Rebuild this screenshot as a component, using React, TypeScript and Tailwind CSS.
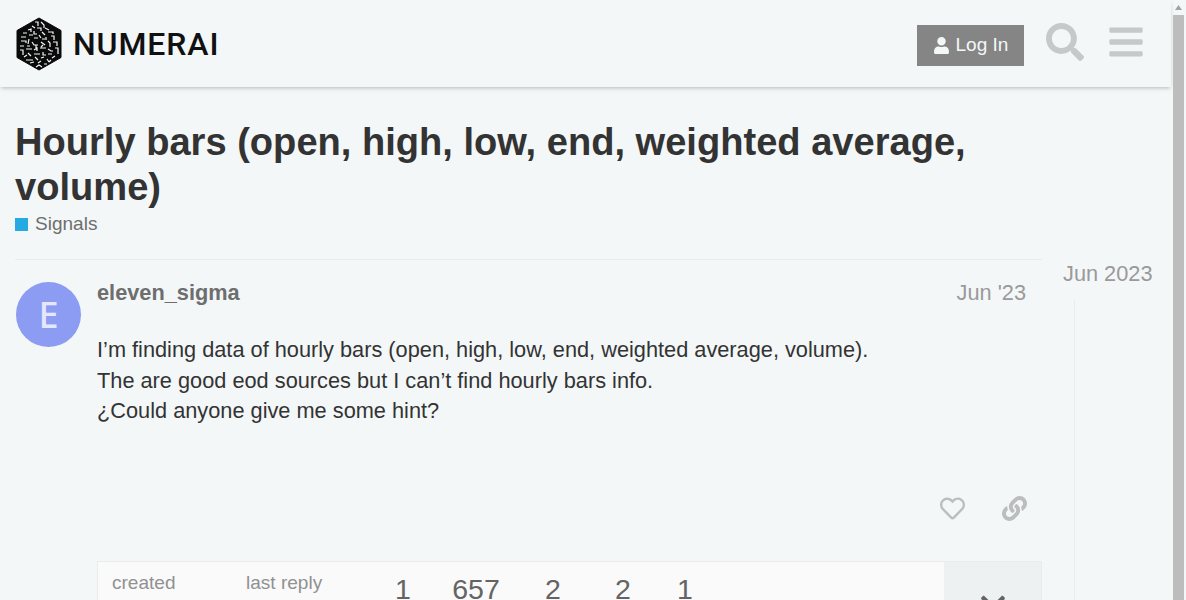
import { FaBars, FaChevronDown, FaLink, FaRegHeart, FaSearch, FaUser } from "react-icons/fa";

const logoMarks = [
  "M20 5h3v4M26 5l3 3v3M17 9l3 2M22 11h4v3M30 11l4 2M13 13l3-1v3M19 14v3h3M27 15l3 3M33 15h5v2M8 16h4M14 18h4M24 18l2 3M31 20v3M36 19h3v4M6 20h5M19 21h4M27 22h3",
  "M6 24h5v2M14 22l-1 5M17 25l2 3h4M26 25l4 3M33 24l2 2v4M38 25h4v4M5 29h4M12 29h3M21 28v3M5 33h3v5M11 32h6M19 33l3-2v3M25 31h6M33 32l3 2h2M40 31h3v6M28 28l-2 2",
  "M9 40l3-2M13 36l3 3M19 37h6M28 35v3h3M33 37h4M40 39l-3 2M11 43h7M20 40l3 3M26 41l3-1M32 42l2 3M15 46l4-1M23 46l3-2M29 47h3M21 50l3-2 3 2M36 43l-2 2",
];

function NumeraiLogo() {
  return (
    <div className="flex items-center gap-[10px]">
      <svg width="48" height="54" viewBox="0 0 48 54" className="shrink-0">
        <path d="M24 1 46 13.5v27L24 53 2 40.500v-27z" fill="#0a0a0a" stroke="#0a0a0a" strokeLinejoin="round" />
        {logoMarks.map((d) => (
          <path key={d} d={d} fill="none" stroke="#f3f7f8" strokeWidth="1.2" />
        ))}
      </svg>
      <span className="font-['Roboto',sans-serif] text-[32px] leading-none font-medium tracking-[0.9px] text-[#111]">
        NUMERAI
      </span>
    </div>
  );
}

function Header() {
  return (
    <header className="flex h-[87px] items-center justify-between pr-[28px] pl-[15px] shadow-[0_2px_4px_-1px_rgba(0,0,0,0.25)]">
      <NumeraiLogo />
      <div className="flex items-center pt-[4px]">
        <button className="flex h-[41px] w-[107px] items-center justify-center gap-[6px] bg-[#858585] text-[19.040px] text-[#f3f7f8]">
          <FaUser className="h-[17px] w-[17px]" />
          Log In
        </button>
        <FaSearch className="mr-[25px] ml-[22px] h-[38px] w-[38px] -translate-y-[4px] text-[#c6c9ca]" />
        <FaBars className="h-[38px] w-[34px] -translate-y-[4px] text-[#c6c9ca]" />
      </div>
    </header>
  );
}

function Stat({ value, className }: { value: string; className: string }) {
  return (
    <div className={`flex flex-col items-center ${className}`}>
      <span className="text-[28.5px] leading-[34px] text-[#646464]">{value}</span>
    </div>
  );
}

function TopicMap() {
  return (
    <div className="ml-[82px] flex h-[120px] border border-[#e9eced] bg-[#fafafa]">
      <div className="flex flex-1 pt-[9px] pl-[14px] text-[19.040px] leading-[24px] text-[#919191]">
        <div className="w-[134px]">created</div>
        <div className="w-[131px]">last reply</div>
        <div className="flex pt-px">
          <Stat value="1" className="w-[52px]" />
          <Stat value="657" className="ml-[17px] w-[60px]" />
          <Stat value="2" className="ml-[23px] w-[48px]" />
          <Stat value="2" className="ml-[22px] w-[48px]" />
          <Stat value="1" className="ml-[14px] w-[48px]" />
        </div>
      </div>
      <div className="flex w-[97px] justify-center bg-[#edf1f2] pt-[27px]">
        <FaChevronDown className="h-[28px] w-[28px] text-[#646464]" />
      </div>
    </div>
  );
}

function Post() {
  return (
    <article className="mt-[22px] flex">
      <div className="ml-px flex h-[65px] w-[65px] shrink-0 items-center justify-center rounded-full bg-[#8c9cf3] font-['Noto_Sans',sans-serif] text-[36px] font-medium text-[#e4e8fc]">
        E
      </div>
      <div className="ml-[16px] flex-1">
        <div className="flex items-center justify-between pr-[16px] text-[21.760px] leading-[22px]">
          <span className="font-bold text-[#6e6e6e]">eleven_sigma</span>
          <span className="text-[#9a9a9a]">Jun '23</span>
        </div>
        <div className="mt-[31px] h-[161px] text-[21.760px] leading-[30.600px] text-[#333]">
          <p>I’m finding data of hourly bars (open, high, low, end, weighted average, volume).</p>
          <p>The are good eod sources but I can’t find hourly bars info.</p>
          <p>¿Could anyone give me some hint?</p>
        </div>
        <div className="flex justify-end gap-[37px] pr-[15px] text-[#bdbdbd]">
          <FaRegHeart className="h-[25px] w-[25px]" />
          <FaLink className="h-[25px] w-[25px]" />
        </div>
      </div>
    </article>
  );
}

export default function App() {
  return (
    <div className="flex h-[600px] overflow-hidden bg-[#f3f7f8] font-['Liberation_Sans',Arial,sans-serif]">
      <div className="w-[1171px] shrink-0">
        <Header />
        <div className="flex pl-[15px]">
          <main className="w-[1027px] shrink-0">
            <h1 className="mt-[33px] text-[38.080px] leading-[45px] font-bold text-[#333]">
              Hourly bars (open, high, low, end, weighted average, volume)
            </h1>
            <div className="mt-[2px] flex items-center gap-[7px] text-[19.040px] leading-[24px] text-[#6e6e6e]">
              <span className="h-[13px] w-[13px] bg-[#25aae1]" />
              Signals
            </div>
            <div className="mt-[23px] border-t border-[#e9eced]" />
            <Post />
            <div className="mt-[40px]">
              <TopicMap />
            </div>
          </main>
          <aside className="ml-[21px] flex-1 pt-[174px] text-[21.760px] leading-[26px] text-[#9a9a9a]">
            <div>Jun 2023</div>
            <div className="mt-[13px] ml-[11px] h-[400px] border-l border-[#e9eced]" />
          </aside>
        </div>
      </div>
      <div className="flex w-[15px] flex-col items-start pl-[2px]">
        <svg width="11" height="15" viewBox="0 0 11 15" className="shrink-0 text-[#a3a3a3]">
          <path d="M5.500 5 9 10H2z" fill="currentColor" />
        </svg>
        <div className="h-full w-[11px] bg-[#bdbdbd]" />
      </div>
    </div>
  );
}
